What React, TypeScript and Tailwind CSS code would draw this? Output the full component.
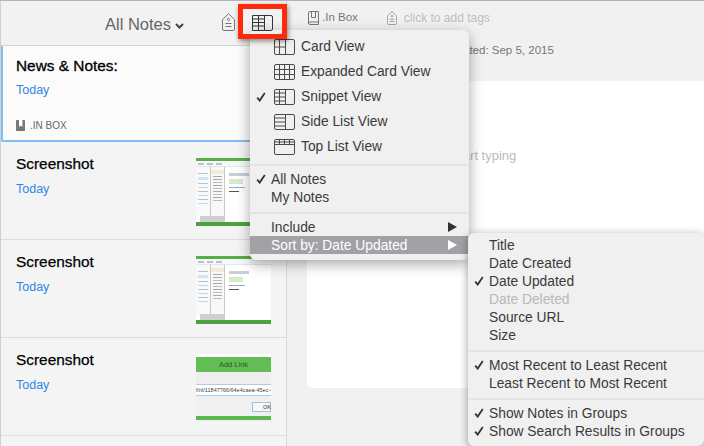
import React from "react";

const S = "#4a4a4a";

function Cells({ kind, color = S }: { kind: string; color?: string }) {
  const base = <rect x="0.5" y="0.5" width="20" height="15" rx="1.5" fill="none" stroke={color} />;
  const lines: Record<string, string> = {
    card: "M11.5 .5V15.5M5.5 .5V15.5M.5 8H11.5",
    expanded: "M5.5 .5V15.5M10.5 .5V15.5M15.5 .5V15.5M.5 5.5H20.5M.5 10.5H20.5",
    snippet: "M11.5 .5V15.5M5.5 .5V15.5M.5 4H11.5M.5 8H11.5M.5 12H11.5",
    side: "M11.5 .5V15.5M.5 4H11.5M.5 8H11.5M.5 12H11.5",
    top: "M.5 3H20.5M.5 5.5H20.5M5.5 .5V5.5M10.5 .5V5.5M15.5 .5V5.5",
  };
  return (
    <svg width="21" height="16" viewBox="0 0 21 16" className="shrink-0">
      {base}
      <path d={lines[kind]} stroke={color} fill="none" />
    </svg>
  );
}

function Check({ className }: { className?: string }) {
  return (
    <svg width="10" height="10" viewBox="0 0 10 10" className={className}>
      <path d="M1.2 5.6 3.7 8.6 8.8 1" fill="none" stroke="#333" strokeWidth="1.8" />
    </svg>
  );
}

function TagIcon({ w = 13, h = 18, color = "#777" }: { w?: number; h?: number; color?: string }) {
  return (
    <svg width={w} height={h} viewBox="0 0 13 18" className="shrink-0">
      <path d="M.5 6.5 6.5 .8 12.5 6.5V16a1.5 1.5 0 0 1-1.5 1.5H2A1.5 1.5 0 0 1 .5 16Z" fill="none" stroke={color} />
      <circle cx="6.5" cy="6.5" r="1.1" fill="none" stroke={color} />
      <path d="M3.5 10.5H9.5M3.5 13.5H9.5" stroke={color} />
    </svg>
  );
}

function Thumb({ link }: { link?: boolean }) {
  if (link) {
    return (
      <div className="w-[75px] h-[68px] shrink-0 bg-[#f0f0f0] flex flex-col overflow-hidden">
        <div className="h-[3px] bg-white" />
        <div className="h-[15px] bg-[#63bd55] text-[7.5px] leading-[15px] text-center text-[#2f5a28]">Add Link</div>
        <div className="h-[12px] bg-[#eeeeee]" />
        <div className="h-[12px] bg-white border-y border-[#a9cdea] text-[5.5px] leading-[10px] whitespace-nowrap overflow-hidden text-[#444]">f/nl/11847766/64e4caea-45ec-49</div>
        <div className="flex-1 flex justify-end items-start pt-[6px]">
          <div className="w-[19px] h-[10px] bg-[#f7f7f7] border border-[#9fc0de] text-[5.5px] leading-[8px] pl-[10px] text-[#333]">OK</div>
        </div>
        <div className="h-[4px] bg-[#5bb84e] mb-[2px]" />
      </div>
    );
  }
  return (
    <div className="w-[75px] h-[68px] shrink-0 bg-white flex flex-col overflow-hidden">
      <div className="h-[3px] bg-[#58ae47]" />
      <div className="h-[6px] bg-[#f6f8fa] border-b border-[#e3e8ec] flex gap-[3px] items-center px-[2px]">
        <div className="h-[2px] w-[6px] bg-[#b7c4ce]" />
        <div className="h-[2px] w-[6px] bg-[#b7c4ce]" />
        <div className="h-[2px] w-[6px] bg-[#b7c4ce]" />
      </div>
      <div className="flex-1 flex">
        <div className="w-[14px] bg-[#f7f9fb] flex flex-col gap-[3px] pt-[6px] px-[2px]">
          <div className="h-[1px] bg-[#b8c0c8]" />
          <div className="h-[3px] bg-[#cfe4f5]" />
          <div className="h-[1px] bg-[#b8c0c8]" />
          <div className="h-[1px] bg-[#cdd4da]" />
          <div className="h-[1px] bg-[#b8c0c8]" />
          <div className="h-[1px] bg-[#cdd4da]" />
          <div className="h-[1px] bg-[#b8c0c8]" />
          <div className="h-[1px] bg-[#cdd4da]" />
        </div>
        <div className="w-[15px] bg-[#f8f8f8] border-x border-[#c8c8c8] flex flex-col gap-[2px] pt-[3px] px-[2px]">
          <div className="h-[4px] -mx-[2px] bg-[#f1ecd6]" />
          <div className="h-[1px] bg-[#a8a8a8]" />
          <div className="h-[1px] bg-[#a8a8a8]" />
          <div className="h-[1px] bg-[#bbbbbb]" />
          <div className="h-[1px] bg-[#a8a8a8]" />
          <div className="h-[1px] bg-[#bbbbbb]" />
          <div className="h-[1px] bg-[#a8a8a8]" />
          <div className="h-[1px] bg-[#bbbbbb]" />
          <div className="h-[1px] bg-[#a8a8a8]" />
          <div className="h-[1px] bg-[#bbbbbb]" />
        </div>
        <div className="flex-1 flex flex-col gap-[3px] pt-[6px] pl-[4px]">
          <div className="h-[3px] w-[20px] bg-[#c6ced6]" />
          <div className="h-[5px] w-[14px] bg-[#d5ecc9]" />
          <div className="h-[1px] w-[16px] bg-[#9aa6d6]" />
          <div className="h-[1px] w-[10px] bg-[#555555]" />
        </div>
      </div>
      <div className="h-[6px] bg-white flex px-[4px]">
        <div className="w-[25px] bg-[#cfcfcf]" />
      </div>
      <div className="h-[4px] bg-[#4ca23e]" />
    </div>
  );
}

function NoteRow({ title, link }: { title: string; link?: boolean }) {
  return (
    <div className="h-[98px] shrink-0 border-b border-[#dcdcdc] flex items-start pt-[16px] pl-[15px] pr-[15px]">
      <div className="flex-1">
        <div className="text-[15.4px] leading-[14px] -mt-[1px] text-black [-webkit-text-stroke:0.25px_black]">{title}</div>
        <div className="text-[12.5px] leading-[14px] text-[#2e86e6] mt-[11px]">Today</div>
      </div>
      <Thumb link={link} />
    </div>
  );
}

function MenuRow({ label, check, big, icon, sub, active, disabled, left }: {
  label: string; check?: boolean; big?: boolean; icon?: string; sub?: boolean; active?: boolean; disabled?: boolean; left: number;
}) {
  return (
    <div
      className={`relative flex items-center whitespace-nowrap text-[13.8px] ${big ? "h-[25px]" : "h-[18px]"} ${active ? "bg-[#a3a1a6] text-white" : disabled ? "text-[#b9b9b9]" : "text-[#3a3a3a]"}`}
      style={{ paddingLeft: left }}
    >
      {check && <Check className="absolute top-1/2 -translate-y-1/2 left-[6px]" />}
      {icon && <span className="mr-[6px]"><Cells kind={icon} /></span>}
      <span className="pt-[2px]">{label}</span>
      {sub && (
        <svg width="9" height="10" viewBox="0 0 9 10" className="absolute right-[12px] top-1/2 -translate-y-1/2">
          <path d="M0 0 9 5 0 10Z" fill={active ? "#ffffff" : "#333333"} />
        </svg>
      )}
    </div>
  );
}

function Sep({ h, top = 0 }: { h: number; top?: number }) {
  return (
    <div className="flex items-center" style={{ height: h, paddingTop: top }}>
      <div className="h-[2px] w-full bg-[#e4e4e4]" />
    </div>
  );
}

export default function App() {
  return (
    <div
      className="relative w-[704px] h-[446px] overflow-hidden flex bg-[#f1f1f1] border-t border-[#b4b4b4]"
      style={{ fontFamily: '"Liberation Sans", Arial, sans-serif' }}
    >
      {/* Notes column */}
      <div className="w-[287px] shrink-0 flex flex-col bg-[#f4f4f4] border-r border-[#d9d9d9] border-l border-l-[#d0d0d0]">
        <div className="h-[45px] shrink-0 border-b border-[#d6d6d6] flex items-center bg-[#f2f2f2]">
          <div className="ml-[104px] pt-[3px] flex items-center text-[16.5px] text-[#666]">
            <span>All Notes</span>
            <svg width="9" height="6" viewBox="0 0 9 6" className="ml-[4px] mt-[2px]">
              <path d="M1 1 4.5 4.5 8 1" fill="none" stroke="#444" strokeWidth="2" />
            </svg>
          </div>
          <div className="ml-[38px] mt-[-2px]">
            <TagIcon />
          </div>
        </div>
        <div className="h-[96px] shrink-0 bg-[#fbfbfb] border-[2px] border-t-0 border-r-0 border-b-[2px] border-[#7fbdf2] flex flex-col pl-[13px] rounded-bl-[2px]">
          <div className="text-[15.4px] leading-[16px] mt-[12px] text-black [-webkit-text-stroke:0.3px_black]">News &amp; Notes:</div>
          <div className="text-[12.5px] leading-[14px] text-[#2e86e6] mt-[9px]">Today</div>
          <div className="mt-[21px] flex items-center text-[10px] text-[#666]">
            <svg width="10" height="11" viewBox="0 0 10 11" className="mr-[4px]">
              <rect width="9" height="11" rx="1" fill="#777" />
              <path d="M3 0V7L4.7 5.6 6.4 7V0Z" fill="#fff" />
            </svg>
            <span>.IN BOX</span>
          </div>
        </div>
        <NoteRow title="Screenshot" />
        <NoteRow title="Screenshot" />
        <NoteRow title="Screenshot" link />
      </div>

      {/* Note detail */}
      <div className="flex-1 flex flex-col min-w-0">
        <div className="h-[33px] shrink-0 flex items-center text-[11.5px] pt-[1px] pl-[21px]">
          <svg width="11" height="14" viewBox="0 0 11 14" className="mr-[3px] mb-[1px]">
            <path d="M2 .5H10.5V11H2A1.5 1.5 0 0 0 .5 12.5V2A1.5 1.5 0 0 1 2 .5ZM.5 12A1.5 1.5 0 0 0 2 13.5H10.5V11M3.5 .5V6.5H7.5V.5" fill="none" stroke="#777" />
          </svg>
          <span className="text-[#777]">.In Box</span>
          <span className="ml-[29px] mr-[7px] mb-[1px]"><TagIcon w={10} h={14} color="#888" /></span>
          <span className="text-[12px] text-[#bdbdbd]">click to add tags</span>
        </div>
        <div className="h-[47px] shrink-0 text-[11.5px] text-[#777] pt-[8px] pl-[130px] whitespace-nowrap">Last Updated: Sep 5, 2015</div>
        <div className="h-[307px] shrink-0 ml-[20px] bg-white rounded-l-[6px] pl-[161px] pt-[18px]">
          <div className="w-px h-[23px] bg-black" />
          <div className="text-[13px] text-[#bbbbbb] mt-[24px] -ml-[161px] pl-[59px] whitespace-nowrap">Click here and start typing</div>
        </div>
      </div>

      {/* View dropdown */}
      <div className="absolute left-[250px] top-[29px] w-[219px] h-[230px] bg-[#f0f0f0] rounded-[6px] shadow-[0_4px_14px_rgba(0,0,0,0.35)] pt-[4px] overflow-hidden">
        <MenuRow big left={24} icon="card" label="Card View" />
        <MenuRow big left={24} icon="expanded" label="Expanded Card View" />
        <MenuRow big check left={24} icon="snippet" label="Snippet View" />
        <MenuRow big left={24} icon="side" label="Side List View" />
        <MenuRow big left={24} icon="top" label="Top List View" />
        <Sep h={11} />
        <MenuRow check left={21} label="All Notes" />
        <MenuRow left={21} label="My Notes" />
        <Sep h={12} top={2} />
        <MenuRow sub left={21} label="Include" />
        <MenuRow sub active left={21} label="Sort by: Date Updated" />
      </div>

      {/* Sort submenu */}
      <div className="absolute left-[468px] top-[232px] w-[236px] h-[213px] bg-[#f0f0f0] rounded-[6px] shadow-[0_2px_8px_rgba(0,0,0,0.4)] pt-[3px] overflow-hidden">
        <MenuRow left={21} label="Title" />
        <MenuRow left={21} label="Date Created" />
        <MenuRow check left={21} label="Date Updated" />
        <MenuRow disabled left={21} label="Date Deleted" />
        <MenuRow left={21} label="Source URL" />
        <MenuRow left={21} label="Size" />
        <Sep h={12} top={2} />
        <MenuRow check left={21} label="Most Recent to Least Recent" />
        <MenuRow left={21} label="Least Recent to Most Recent" />
        <Sep h={12} top={2} />
        <MenuRow check left={21} label="Show Notes in Groups" />
        <MenuRow check left={21} label="Show Search Results in Groups" />
      </div>

      {/* Callout */}
      <div className="absolute left-[238px] top-[3px] w-[49px] h-[35px] border-[5px] border-[#ff2a0a] shadow-[1px_2px_5px_rgba(0,0,0,0.45)] flex items-center justify-center">
        <svg width="21" height="16" viewBox="0 0 21 16" className="mt-[3px] -ml-[1px]">
          <path d="M.5 15.5V.5H19A1.5 1.5 0 0 1 20.5 2V14A1.5 1.5 0 0 1 19 15.5H12.5V.5M.5 4H12.5M.5 7.5H12.5M.5 11H12.5M.5 15.5H12.5M6.5 .5V15.5" fill="none" stroke="#333" />
        </svg>
      </div>
    </div>
  );
}
